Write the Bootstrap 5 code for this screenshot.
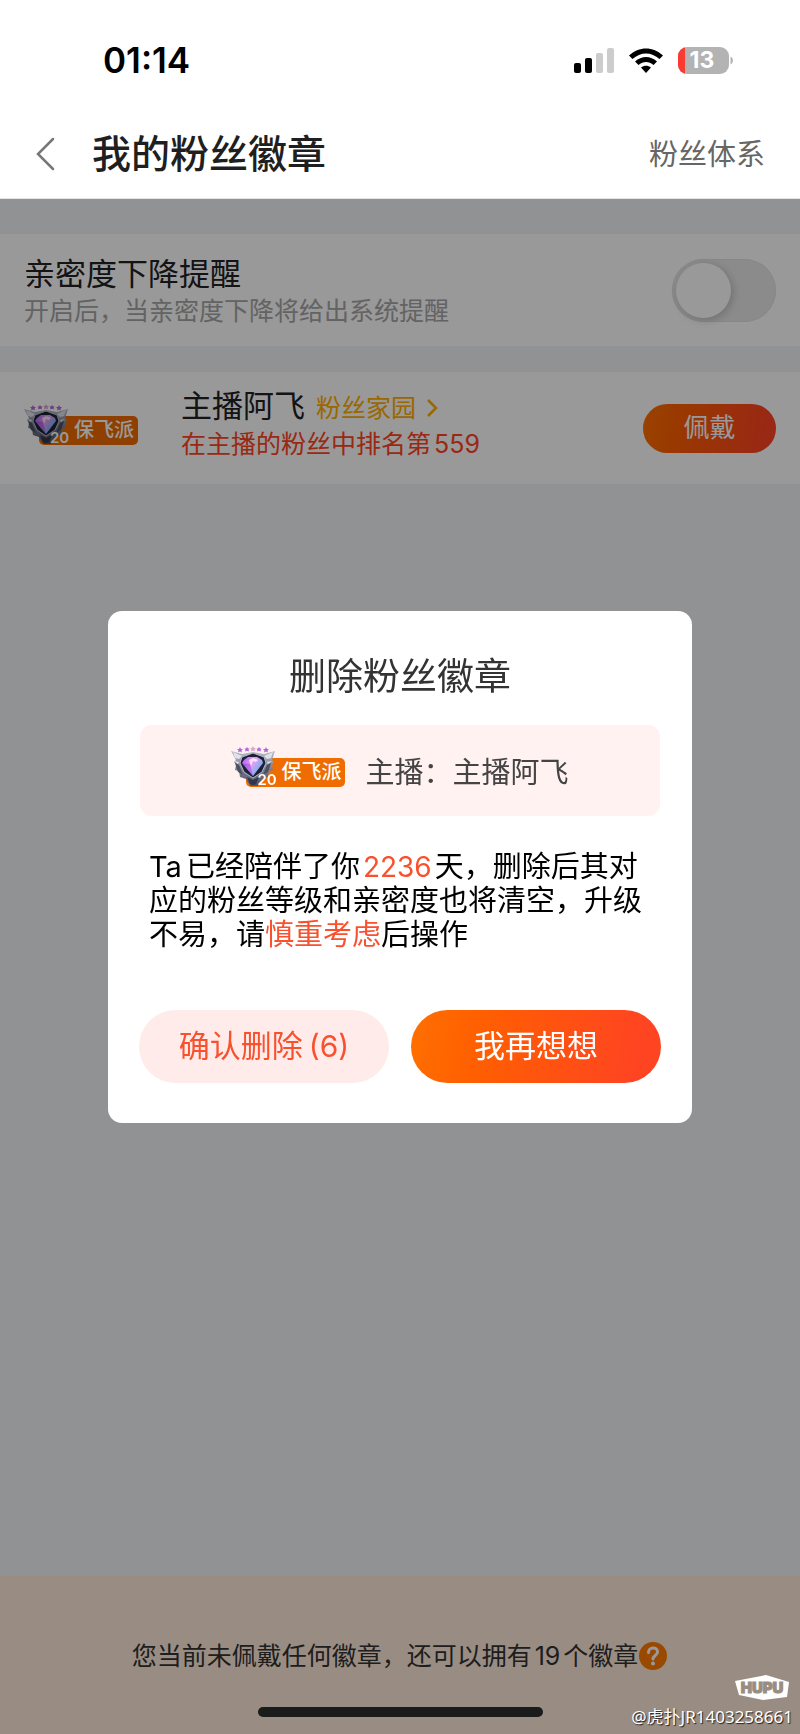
<!DOCTYPE html>
<html lang="zh-CN">
<head>
<meta charset="utf-8">
<meta name="viewport" content="width=device-width, initial-scale=1">
<title>我的粉丝徽章</title>
<link href="https://cdn.jsdelivr.net/npm/bootstrap@5.3.0/dist/css/bootstrap.min.css" rel="stylesheet">
<style>
  body { font-family: Inter, "Noto Sans CJK SC", sans-serif; background: #f1f4f7; color: #222; }
  button, input { font-family: inherit; }
  .status { height: 110px; padding: 10px 67px 0 103px; }
  .clock { font-size: 35px; font-weight: 600; line-height: 40px; color: #000; }
  .topbar { height: 89px; padding: 0 35px 0 36px; border-bottom: 1px solid #e4e4e4; }
  .page-title { font-size: 39px; line-height: 50px; font-weight: 500; margin-left: 37px; color: #1f1f1f; }
  .top-link { font-size: 29px; line-height: 40px; color: #666; text-decoration: none; padding-top: 2px; }
  .scene { padding-top: 35px; }
  .shade { background: rgba(0, 0, 0, .4); z-index: 2; }
  .line-row { min-height: 112px; padding: 0 24px; }
  .line-row + .line-row { margin-top: 26px; }
  .row-name { font-size: 31px; line-height: 38px; color: #222; }
  .row-note { font-size: 25px; line-height: 36px; }
  .note-grey { color: #a6a6a6; }
  .note-red { color: #ff4422; }
  .home-link { font-size: 25px; line-height: 36px; color: #ffae00; text-decoration: none; margin-left: 11px; padding-top: 4px; gap: 6px; }
  .latin { margin: 0 3px; }
  .form-check-input.big-switch { width: 104px; height: 63px; margin: 0; border: 0; border-radius: 32px; background: #e8e8e8; position: relative; box-shadow: inset 0 0 0 1px #e2e2e2; }
  .big-switch::before { content: ""; position: absolute; left: 4px; top: 4px; width: 55px; height: 55px; border-radius: 50%; background: #fff; box-shadow: 2px 2px 8px rgba(0, 0, 0, .2); }
  .fan-badge { width: 114px; height: 41px; padding: 12px 0 0 15px; flex: none; }
  .fan-badge svg { left: 0; top: 0; }
  .badge-name { height: 29px; border-radius: 5px; background: #ef6c00; color: #fff; font-size: 20px; font-weight: 500; line-height: 28px; padding-right: 4px; text-align: right; }
  .badge-level { left: 26px; top: 27px; font: 600 15px/14px Inter, sans-serif; color: #fff; }
  .host-info { margin-left: 43px; }
  .pill { border: 0; border-radius: 40px; }
  .pill-hot { background: linear-gradient(100deg, #ff7000, #ff6000 25%, #ff4422 90%); color: #fff; }
  .pill-soft { background: #ffebe9; color: #f9512e; }
  .wear { width: 133px; height: 49px; font-size: 26px; line-height: 36px; }
  .footer-bar { height: 158px; padding: 62px 0 17px; background: #ffebda; }
  .footer-text { font-size: 25px; line-height: 36px; color: #333; }
  .home-bar { width: 285px; height: 10px; border-radius: 5px; background: #2b2f2d; }
  .watermark { right: 7px; bottom: 4px; z-index: 3; color: #fff; }
  .watermark-name { font: 17px/26px "Noto Sans", "Noto Sans CJK SC", sans-serif; text-shadow: 1px 1px 1px rgba(0, 0, 0, .8); }
  .logo-mark { margin: 0 3px 4px 0; }
  .modal-dialog.confirm { width: 73%; max-width: 584px; margin: 0 auto; min-height: 100%; }
  .confirm .modal-content { border: 0; border-radius: 14px; padding: 42px 31px 40px; }
  .confirm-title { font-size: 37px; line-height: 47px; font-weight: 400; color: #333; }
  .host-card { margin: 25px 1px 34px; height: 91px; border-radius: 12px; background: #fff2f0; font-size: 29px; color: #444; gap: 20px; }
  .confirm-text { font-size: 29px; line-height: 34px; color: #000; padding: 0 10px; margin-bottom: 58px; }
  .confirm-text em { font-style: normal; color: #f9512e; }
  .confirm-text .latin { font-size: 28px; line-height: 28px; }
  .choices { gap: 22px; }
  .choices .pill { height: 73px; font-size: 31px; flex: 1 1 0; }
  .countdown { margin-left: 6px; font-size: 30px; }
</style>
</head>
<body class="d-flex flex-column min-vh-100">

<svg width="0" height="0" class="position-absolute" aria-hidden="true">
  <defs>
    <linearGradient id="steel" x1="0" y1="0" x2="0" y2="1"><stop offset="0" stop-color="#b9bcc8"/><stop offset=".5" stop-color="#7a7e90"/><stop offset="1" stop-color="#474a5c"/></linearGradient>
    <linearGradient id="gem" x1="0" y1="0" x2="1" y2=".6"><stop offset="0" stop-color="#a45cf0"/><stop offset=".5" stop-color="#ee9cf6"/><stop offset="1" stop-color="#58b9ea"/></linearGradient>
    <symbol id="emblem" viewBox="0 0 44 40">
      <g fill="#b565dc">
        <path d="M9 1l1 2h2l-1.500 1.500.5 2-2-1-2 1 .5-2L6 3h2z"/>
        <path d="M16 1l1 1.500h1.500L17.500 4l.5 1.500-2-.8-2 .8.500-1.500-1-1.500H15z"/>
        <path d="M22 0l1 2h2l-1.500 1.500.5 2-2-1-2 1 .5-2L19 2h2z" fill="#d9a7c9"/>
        <path d="M28 1l1 1.500h1.500L29.500 4l.5 1.500-2-.8-2 .8.500-1.500-1-1.500H27z"/>
        <path d="M35 1l1 2h2l-1.500 1.500.5 2-2-1-2 1 .5-2L32 3h2z"/>
      </g>
      <path d="M0 5l11 3 11-2 11 2 11-3-3 9 2 2-2 3 1 5-4 1-1 6-6 2-5 8-3 1-3-1-5-8-6-2-1-6-4-1 1-5-2-3 2-2z" fill="url(#steel)"/>
      <path d="M2 6l9 4-3 3-4-1zM42 6l-9 4 3 3 4-1z" fill="#dfe2ea"/>
      <path d="M4 17l4 2 4 10-5-3zM40 17l-4 2-4 10 5-3z" fill="#4b4f63"/>
      <path d="M3 15l5 1-1 2zM41 15l-5 1 1 2z" fill="#e4e6ee"/>
      <path d="M11 11l11-4 11 4 2 6-4 9-9 6-9-6-4-9z" fill="#1e2038" stroke="#b4b7c6" stroke-width="1"/>
      <path d="M16 31l6 3 6-3-3 7-3 1-3-1z" fill="#33364a"/>
      <path d="M13 14l4-3h9l5 3 1 3-10 13-11-13z" fill="url(#gem)"/>
      <path d="M18 14l4-2 5 2-2 2-3-1-2 5z" fill="#fff" opacity=".75"/>
      <path d="M11 17l8 1 3 12z" fill="#8238db" opacity=".45"/>
    </symbol>
  </defs>
</svg>

<header class="bg-white">
  <div class="status d-flex align-items-center justify-content-between">
    <span class="clock">01:14</span>
    <svg width="160" height="30" viewBox="0 0 160 30" aria-hidden="true">
      <rect x="1" y="18" width="7" height="10" rx="2"/><rect x="12" y="13" width="7" height="15" rx="2"/>
      <rect x="23" y="8" width="7" height="20" rx="2" fill="#ccc"/><rect x="34" y="3" width="7" height="25" rx="2" fill="#ccc"/>
      <path d="M56 10.500C66 1 80 1 90 10.500L86.500 14C78.500 6.500 67.500 6.500 59.500 14zM62 16.500c6.500-6 15.500-6 22 0L80.500 20c-4.500-4-10.500-4-15 0zM68 22.500c3-2.500 7-2.500 10 0L73 28z"/>
      <clipPath id="cell"><rect x="105" y="2" width="51" height="27" rx="9"/></clipPath>
      <g clip-path="url(#cell)"><rect x="105" y="2" width="51" height="27" fill="#b3b3b3"/><rect x="105" y="2" width="7" height="27" fill="#fb3b32"/></g>
      <path d="M157.500 11.500q2.500 1 2.500 4t-2.500 4z" fill="#b3b3b3"/>
      <text x="129" y="23" text-anchor="middle" font-family="Inter, sans-serif" font-size="23" font-weight="700" fill="#fff">13</text>
    </svg>
  </div>
  <nav class="topbar d-flex align-items-center" aria-label="页面导航">
    <a href="#" aria-label="返回" class="d-flex"><svg width="19" height="34" viewBox="0 0 19 34" fill="none" stroke="#777" stroke-width="2.500" stroke-linecap="round"><path d="M17 2L2 17l15 15"/></svg></a>
    <h1 class="page-title mb-0">我的粉丝徽章</h1>
    <a href="#" class="top-link ms-auto">粉丝体系</a>
  </nav>
</header>

<main class="scene position-relative flex-grow-1 d-flex flex-column">
  <section class="line-row bg-white d-flex align-items-center justify-content-between">
    <label for="remind" class="pt-1">
      <span class="row-name d-block">亲密度下降提醒</span>
      <span class="row-note note-grey d-block">开启后，当亲密度下降将给出系统提醒</span>
    </label>
    <input class="form-check-input big-switch" type="checkbox" role="switch" id="remind">
  </section>

  <section class="line-row bg-white d-flex align-items-center">
    <div class="fan-badge position-relative mb-2">
      <div class="badge-name">保飞派</div>
      <svg class="position-absolute" width="44" height="40" aria-hidden="true"><use href="#emblem"/></svg>
      <span class="badge-level position-absolute">20</span>
    </div>
    <div class="host-info mb-2">
      <div class="d-flex align-items-center">
        <span class="row-name">主播阿飞</span>
        <a href="#" class="home-link d-flex align-items-center">粉丝家园<svg width="18" height="20" viewBox="0 0 18 20" fill="none" stroke="#ffae00" stroke-width="2.500"><path d="M6 2l8 8-8 8"/></svg></a>
      </div>
      <div class="row-note note-red">在主播的粉丝中排名第<span class="latin">559</span></div>
    </div>
    <button type="button" class="btn pill pill-hot wear p-0 ms-auto">佩戴</button>
  </section>

  <footer class="footer-bar mt-auto d-flex flex-column align-items-center justify-content-between">
    <div class="footer-text d-flex align-items-center">
      <span>您当前未佩戴任何徽章，还可以拥有<span class="latin">19</span>个徽章</span>
      <svg width="30" height="30" viewBox="0 0 30 30" role="img" aria-label="帮助"><circle cx="15" cy="15" r="14" fill="#ff7b00"/><path d="M10.500 11.500c0-6 9-6 9-.5 0 3.500-4.500 3.500-4.500 7" fill="none" stroke="#fff" stroke-width="3" stroke-linecap="round"/><circle cx="15" cy="22.500" r="2" fill="#fff"/></svg>
    </div>
    <div class="home-bar"></div>
  </footer>

  <div class="shade position-absolute top-0 start-0 w-100 h-100"></div>

  <div class="watermark position-absolute d-flex flex-column align-items-end">
    <svg class="logo-mark" width="56" height="25" viewBox="0 0 56 25" role="img" aria-label="HUPU">
      <path d="M1 6L32 0l23 7-2 15-24 3L5 20z" fill="#fff"/>
      <text x="28" y="18" text-anchor="middle" font-family="Inter, sans-serif" font-size="15" font-weight="900" fill="#998d82" stroke="#998d82" stroke-width="1">HUPU</text>
    </svg>
    <span class="watermark-name">@虎扑JR1403258661</span>
  </div>
</main>

<div class="modal d-block" role="dialog" aria-modal="true" aria-labelledby="confirmTitle">
  <div class="modal-dialog modal-dialog-centered confirm">
    <div class="modal-content">
      <h2 class="confirm-title text-center mb-0" id="confirmTitle">删除粉丝徽章</h2>
      <div class="host-card d-flex align-items-center justify-content-center">
        <div class="fan-badge position-relative mb-2">
          <div class="badge-name">保飞派</div>
          <svg class="position-absolute" width="44" height="40" aria-hidden="true"><use href="#emblem"/></svg>
          <span class="badge-level position-absolute">20</span>
        </div>
        <span class="pt-1">主播：主播阿飞</span>
      </div>
      <p class="confirm-text">Ta<span class="ps-1">已</span>经陪伴了你<em class="latin">2236</em>天，删除后其对应的粉丝等级和亲密度也将清空，升级不易，请<em>慎重考虑</em>后操作</p>
      <div class="choices d-flex">
        <button type="button" class="btn pill pill-soft p-0">确认删除<span class="countdown">(6)</span></button>
        <button type="button" class="btn pill pill-hot p-0">我再想想</button>
      </div>
    </div>
  </div>
</div>

<script src="https://cdn.jsdelivr.net/npm/bootstrap@5.3.0/dist/js/bootstrap.bundle.min.js"></script>
</body>
</html>
